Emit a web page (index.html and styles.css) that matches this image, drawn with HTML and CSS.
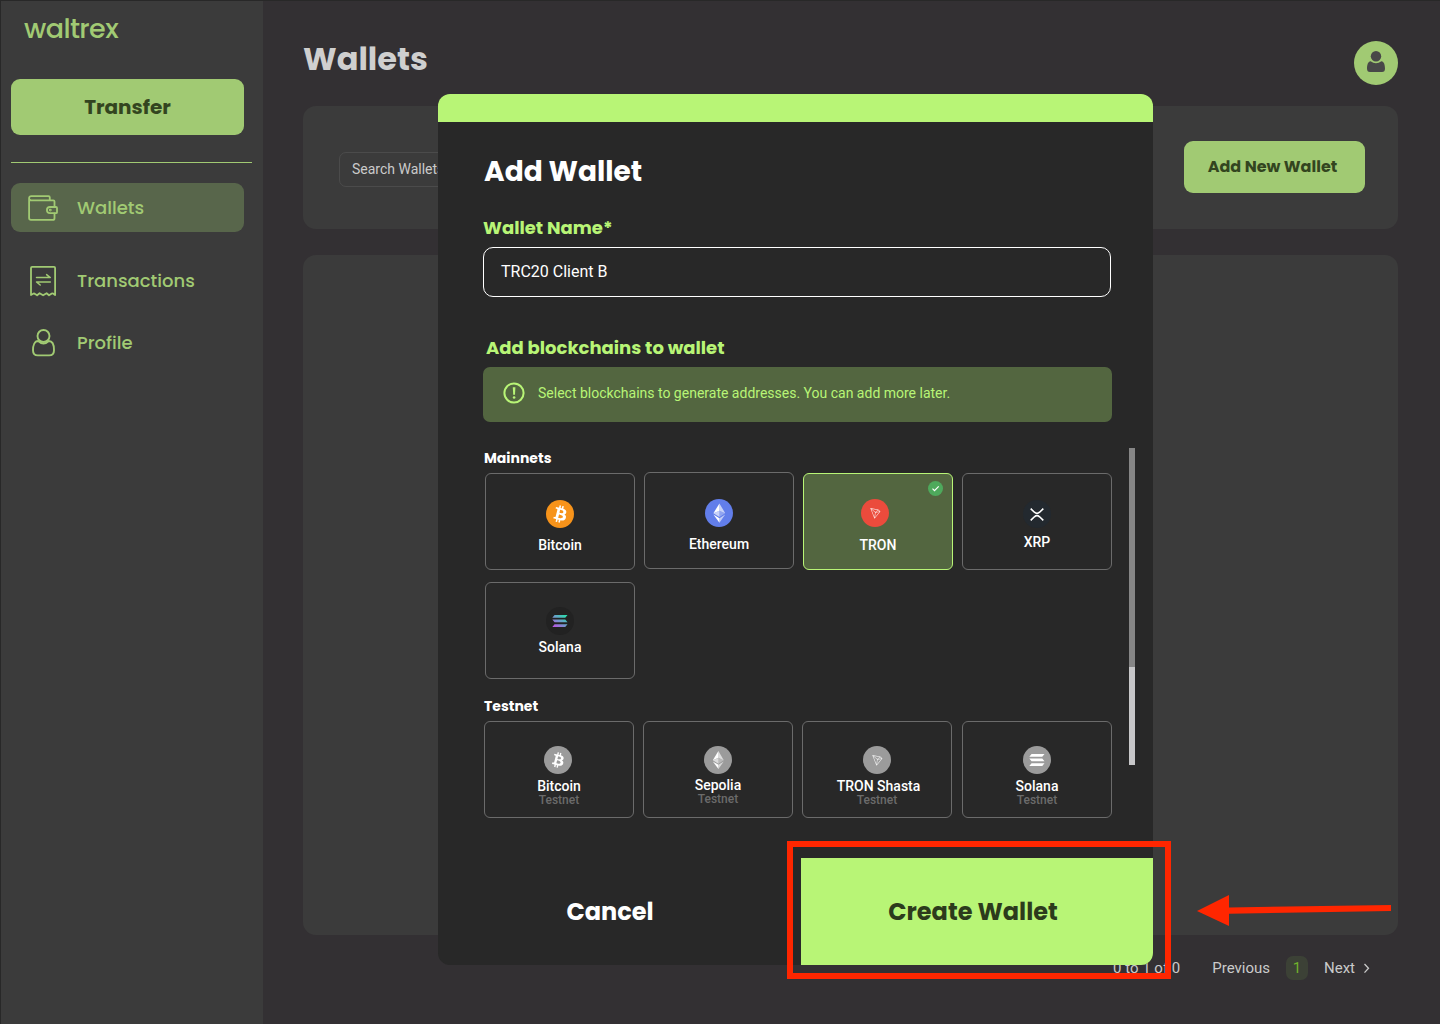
FILE: index.html
```html
<!DOCTYPE html>
<html lang="en">
<head>
<meta charset="utf-8">
<title>Waltrex - Wallets</title>
<link rel="stylesheet" href="styles.css">
</head>
<body>
<svg class="defs" width="0" height="0">
  <defs>
    <linearGradient id="solana-gradient" x1="0" y1="1" x2="1" y2="0">
      <stop offset="0" stop-color="#c64be8"/><stop offset=".5" stop-color="#6e9ccb"/><stop offset="1" stop-color="#1fe8a8"/>
    </linearGradient>
    <symbol id="btc" viewBox="0 0 32 32">
      <path fill="#fff" d="M23.189 14.02c.314-2.096-1.283-3.223-3.465-3.975l.708-2.84-1.728-.43-.69 2.765c-.454-.114-.92-.22-1.385-.326l.695-2.783L15.596 6l-.708 2.839c-.376-.086-.746-.17-1.104-.26l.002-.009-2.384-.595-.46 1.846s1.283.294 1.256.312c.7.175.826.638.805 1.006l-.806 3.235c.048.012.11.03.18.057l-.183-.045-1.13 4.532c-.086.212-.303.531-.793.41.018.025-1.256-.313-1.256-.313l-.858 1.978 2.25.561c.418.105.828.215 1.231.318l-.715 2.872 1.727.43.708-2.84c.472.127.93.245 1.378.357l-.706 2.828 1.728.43.715-2.866c2.948.558 5.164.333 6.097-2.333.752-2.146-.037-3.385-1.588-4.192 1.13-.26 1.98-1.003 2.207-2.538zm-3.95 5.538c-.533 2.147-4.148.986-5.32.695l.95-3.805c1.172.293 4.929.872 4.37 3.11zm.535-5.569c-.487 1.953-3.495.96-4.47.717l.86-3.45c.975.243 4.118.696 3.61 2.733z"/>
    </symbol>
    <symbol id="eth" viewBox="0 0 32 32">
      <g fill="#fff"><path fill-opacity=".65" d="M16.5 5v8.3l6.6 3z"/><path d="M16.5 5 9.6 16.3l6.9-3z"/><path fill-opacity=".6" d="M16.5 21.9V27l6.6-9.2z"/><path d="M16.5 27v-5.1l-6.9-4.1z"/><path fill-opacity=".3" d="m16.5 20.5 6.6-4.2-6.6-2.9z"/><path fill-opacity=".65" d="m9.6 16.3 6.9 4.2v-7.1z"/></g>
    </symbol>
    <symbol id="trx" viewBox="0 0 32 32">
      <path fill="#fff" fill-opacity=".86" d="M21.932 9.913 7.5 7.257l7.595 19.112 10.583-12.894-3.746-3.562zm-.232 1.17 2.208 2.099-6.038 1.093 3.83-3.192zm-5.142 2.973-6.364-5.278 10.402 1.914-4.038 3.364zm-.453.934-1.038 8.58L9.472 9.487l6.633 5.502zm.96.455 6.687-1.21-7.67 9.343.983-8.133z"/>
    </symbol>
    <symbol id="sol" viewBox="0 0 32 32">
      <path d="M9.8 9.2h14.8l-2.6 3H7.2zM7.2 14.4H22l2.6 3.1H9.8zM9.8 19.7h14.8L22 22.8H7.2z"/>
    </symbol>
  </defs>
</svg>

<div class="app">
  <aside class="sidebar">
    <div class="brand">waltrex</div>
    <button class="transfer">Transfer</button>
    <hr class="divider">
    <nav class="nav">
      <a class="nav-item is-active">
        <svg width="30" height="26" viewBox="0 0 30 26" fill="none" stroke="currentColor" stroke-width="1.8" stroke-linejoin="round" stroke-linecap="round"><path d="M26.5 11.5V6.5q0-1.2-1.2-1.2H3.2a2.1 2.1 0 0 1 0-4.2H20.5q1.3 0 1.3 1.3V5.200M1.100 3.200V23q0 1.900 1.900 1.900H24.800q1.700 0 1.700-1.700V18.500"/><path d="M22 12h6q1 0 1 1v4.200q0 1-1 1h-6a3.100 3.100 0 0 1 0-6.200Z"/><circle cx="22.300" cy="15.100" r=".5"/></svg>
        <span class="nav-wallets">Wallets</span>
      </a>
      <a class="nav-item nav-item-transactions">
        <svg width="30" height="32" viewBox="0 0 30 32" fill="none" stroke="currentColor" stroke-width="1.800" stroke-linejoin="round" stroke-linecap="round"><path d="M3 30V3q0-1.100 1.100-1.100H26q1.100 0 1.100 1.100V30l-2.100-1.500Q24 28 23 29l-2 1.300-2.400-2.100-3.500 2.100-3.500-2.100-2.500 2.100-2-1.300q-1-.900-2-.2Z"/><path stroke-width="1.500" d="M8.500 12.600H22.300L18.600 9.600M22.300 17H8.500l3.700 3"/></svg>
        <span class="nav-transactions">Transactions</span>
      </a>
      <a class="nav-item">
        <svg width="30" height="32" viewBox="0 0 30 32" fill="none" stroke="currentColor" stroke-width="1.900" stroke-linejoin="round"><circle cx="15.500" cy="9" r="6"/><path d="M10.200 14C6.500 14 5 18.500 5 23.200q0 5.200 4.800 5.200H21.200q4.800 0 4.800-5.200C26 18.500 24.500 14 20.800 14 17.500 17.100 13.500 17.100 10.200 14Z"/></svg>
        <span class="nav-profile">Profile</span>
      </a>
    </nav>
  </aside>

  <main class="main">
    <header class="topbar">
      <h1>Wallets</h1>
      <div class="avatar">
        <svg width="20" height="24" viewBox="0 0 20 24" fill="#484848"><circle cx="10" cy="6.300" r="5.200"/><path d="M4.600 11.300Q10 15.200 15.400 11.300C18 11.500 19 15 19 18.500q0 3.500-3 3.500H4q-3 0-3-3.500C1 15 2 11.500 4.600 11.300Z"/></svg>
      </div>
    </header>
    <section class="panel toolbar">
      <div class="search">Search Wallets</div>
      <button class="add-wallet">Add New Wallet</button>
    </section>
    <section class="panel listing"></section>
    <footer class="pager">
      <span class="range">0 to 1 of 0</span>
      <span class="prev">Previous</span>
      <span class="page">1</span>
      <span class="next">Next</span>
      <svg width="8" height="12" viewBox="0 0 8 12" fill="none" stroke="#cacaca" stroke-width="1.300"><path d="m1.500 2 4 4.300-4 4.300"/></svg>
    </footer>
  </main>
</div>

<div class="modal">
  <div class="modal-accent"></div>
  <div class="modal-body">
    <h2>Add Wallet</h2>
    <label class="field-label">Wallet Name*</label>
    <div class="input">TRC20 Client B</div>
    <h3>Add blockchains to wallet</h3>
    <div class="notice">
      <svg width="22" height="22" viewBox="0 0 22 22" fill="none" stroke="#b8f576" stroke-width="2"><circle cx="11" cy="11" r="9.600"/><path fill="#b8f576" stroke="none" d="M9.800 5.300h2.600L12 12.700h-1.800z"/><circle cx="11.100" cy="15.500" r="1.300" fill="#b8f576" stroke="none"/></svg>
      <span>Select blockchains to generate addresses. You can add more later.</span>
    </div>
    <div class="networks">
      <div class="groups">
        <h4>Mainnets</h4>
        <div class="grid">
          <div class="card"><svg class="coin coin-btc"><use href="#btc"/></svg><b>Bitcoin</b></div>
          <div class="card raised"><svg class="coin coin-eth"><use href="#eth"/></svg><b>Ethereum</b></div>
          <div class="card selected"><svg class="coin coin-trx"><use href="#trx" x="5" y="5" width="18" height="18"/></svg><b>TRON</b>
            <svg class="check" width="15" height="15" viewBox="0 0 15 15" fill="none"><circle cx="7.500" cy="7.500" r="7.500" fill="#4ea95c"/><path d="m4.500 7.700 2 2 4.200-4.300" stroke="#fff" stroke-width="1.200"/></svg>
          </div>
          <div class="card xrp"><svg class="coin coin-xrp" viewBox="0 0 28 28" fill="none" stroke="#fff" stroke-width="1.600"><path d="m7.700 8.600 3.700 3.600q2.600 2.300 5.200 0l3.700-3.600M7.700 20.400l3.700-3.600q2.600-2.300 5.200 0l3.700 3.600"/></svg><b>XRP</b></div>
          <div class="card solana"><svg class="coin coin-sol"><use href="#sol"/></svg><b>Solana</b></div>
        </div>
        <h4 class="testnet-title">Testnet</h4>
        <div class="grid testnets">
          <div class="card"><svg class="coin shift-left"><use href="#btc" x="1.500" y="1.500" width="25" height="25"/></svg><b>Bitcoin</b><small>Testnet</small></div>
          <div class="card sepolia"><svg class="coin"><use href="#eth" x="1" y="1" width="26" height="26"/></svg><b>Sepolia</b><small>Testnet</small></div>
          <div class="card shasta"><svg class="coin"><use href="#trx" x="5" y="5" width="18" height="18"/></svg><b>TRON Shasta</b><small>Testnet</small></div>
          <div class="card"><svg class="coin" fill="#fff"><use href="#sol"/></svg><b>Solana</b><small>Testnet</small></div>
        </div>
      </div>
      <div class="scrollbar"><div class="thumb"></div></div>
    </div>
  </div>
  <div class="actions">
    <button class="cancel">Cancel</button>
    <button class="create">Create Wallet</button>
  </div>
</div>

<svg class="callout" width="620" height="150" viewBox="0 0 620 150">
  <rect x="10" y="14" width="378" height="132" fill="none" stroke="#ff2600" stroke-width="6"/>
  <path d="M417 81 449 65V77.400L611 75V81L449 83.700V96Z" fill="#ff2600"/>
</svg>
</body>
</html>
```
FILE: styles.css
```css
* { box-sizing: border-box; }
body {
  margin: 0;
  width: 1440px;
  height: 1024px;
  overflow: hidden;
  position: relative;
  background: #333033;
  font-family: Roboto, sans-serif;
}
h1, h2, h3, h4 { margin: 0; font-weight: 700; }
h1, h2, h3, h4, .brand, .transfer, .nav, .add-wallet, .field-label, .actions {
  font-family: Poppins, Inter, sans-serif;
}
button { border: 0; padding: 0; font-family: inherit; font-weight: 700; }
.defs { position: absolute; }

.app { display: flex; height: 1024px; border-top: 1px solid #282828; border-left: 1px solid #282828; }
.sidebar { width: 262px; padding: 10px 11px 0 10px; background: #3b3b3b; color: #a1ca73; }
.brand { height: 36px; padding-left: 13px; font: 500 27px/36px Poppins, Inter, sans-serif; letter-spacing: -.6px; }
.transfer { display: block; width: 233px; height: 56px; margin-top: 32px; border-radius: 9px; background: #a1ca73; color: #33451f; font: 700 20px/56px Poppins, Inter, sans-serif; }
.divider { height: 1px; margin: 27px 0 20px; border: 0; background: #a1ca73; }
.nav-item { display: flex; align-items: center; width: 233px; height: 49px; padding-left: 17px; gap: 19px; border-radius: 9px; font-size: 18px; font-weight: 500; }
.nav-item.is-active { background: #58664b; }
.nav-item-transactions { margin: 24px 0 13px; }

.main { width: 1177px; padding: 40px 0 0 40px; }
.topbar { display: flex; justify-content: space-between; width: 1095px; height: 65px; }
h1 { margin-top: -6px; color: #cfcfcf; font-size: 32px; line-height: 48px; }
.avatar { display: grid; place-items: center; width: 44px; height: 44px; padding-bottom: 3px; border-radius: 50%; background: #a1ca73; }
.panel { width: 1095px; border-radius: 13px; background: #3b3b3b; }
.toolbar { display: flex; justify-content: space-between; height: 123px; padding: 35px 33px 0 36px; }
.search { width: 300px; height: 35px; margin-top: 11px; padding-left: 12px; border: 1px solid #4b4b4b; border-radius: 7px; color: #cacaca; font-size: 14px; line-height: 33px; }
.add-wallet { width: 181px; height: 52px; padding-right: 4px; border-radius: 9px; background: #a1ca73; color: #33451f; font: 700 16px/52px Poppins, Inter, sans-serif; }
.listing { height: 680px; margin-top: 26px; }
.pager { display: flex; align-items: center; height: 24px; margin: 21px 0 0 810px; color: #cacaca; font-size: 15px; }
.prev { margin-left: 32px; }
.page { width: 22px; margin: 0 16px; border-radius: 7px; background: #3c4136; color: #70b22c; line-height: 24px; text-align: center; }
.pager svg { margin-left: 8px; }

.modal { position: absolute; left: 438px; top: 94px; width: 715px; height: 871px; overflow: hidden; border-radius: 12px; background: #282828; color: #fff; }
.modal-accent { height: 28px; background: #b8f576; }
.modal-body { height: 736px; padding: 29px 18px 0 45px; }
h2 { padding-left: 1px; font-size: 28px; line-height: 42px; }
.field-label { display: block; margin-top: 21px; color: #b8f576; font-size: 18px; font-weight: 700; line-height: 27px; }
.input { width: 628px; height: 50px; margin-top: 6px; padding-left: 17px; border: 1px solid #fff; border-radius: 10px; font-size: 16px; line-height: 48px; }
h3 { margin-top: 37px; padding-left: 3px; color: #b8f576; font-size: 18px; line-height: 27px; }
.notice { display: flex; align-items: center; gap: 13px; width: 629px; height: 55px; margin-top: 6px; padding: 0 0 3px 20px; border-radius: 7px; background: #536640; color: #b8f576; font-size: 14px; }
.networks { display: flex; justify-content: space-between; margin-top: 26px; }
h4 { padding-left: 1px; font-size: 14px; line-height: 20px; }
.grid { display: grid; grid-template-columns: repeat(4, 150px); gap: 12px 9px; padding: 5px 0 0 2px; }
.card { position: relative; display: flex; flex-direction: column; align-items: center; height: 97px; padding-top: 26px; border: 1px solid #6b6b6b; border-radius: 6px; }
.card b { margin-top: 9px; font-size: 14px; font-weight: 500; line-height: 16px; white-space: nowrap; }
.card small { color: #6b6b6b; font-size: 12px; font-weight: 500; line-height: 14px; }
.coin { width: 28px; height: 28px; border-radius: 50%; background: #9b9b9b; }
.coin-btc { background: #f7931a; }
.coin-eth { background: #627eea; }
.coin-trx { margin-left: -6px; background: #eb4b3c; }
.coin-xrp { background: #23292f; }
.coin-sol { background: #222; fill: url(#solana-gradient); }
.raised { margin: -1px 0 1px; }
.selected { padding-top: 25px; border-color: #b8f576; background: #536640; }
.selected .coin { margin-left: -6px; }
.selected b { margin-top: 10px; }
.check { position: absolute; top: 7px; right: 9px; }
.xrp b { margin-top: 6px; }
.solana { padding-top: 24px; }
.solana b { margin-top: 4px; }
.testnet-title { margin-top: 17px; }
.testnets { grid-template-columns: 150px 150px 151px 150px; padding-left: 1px; }
.testnets .card { width: 150px; padding-top: 24px; }
.testnets b { margin-top: 4px; }
.testnets small { margin-top: -1px; }
.testnets .sepolia b { margin-top: 3px; }
.shift-left { margin-left: -2px; }
.shasta b { margin-left: 3px; }
.scrollbar { width: 6px; height: 317px; padding-top: 219px; background: #868686; }
.thumb { height: 98px; background: #c7c7c9; }
.actions { display: flex; height: 107px; }
.actions button { color: #fff; background: none; font: 700 24px/107px Poppins, Inter, sans-serif; }
.actions .cancel { width: 363px; padding-right: 19px; text-align: center; }
.actions .create { width: 352px; padding-right: 8px; color: #2c3b1c; background: #b8f576; }

.callout { position: absolute; left: 780px; top: 830px; }
```
